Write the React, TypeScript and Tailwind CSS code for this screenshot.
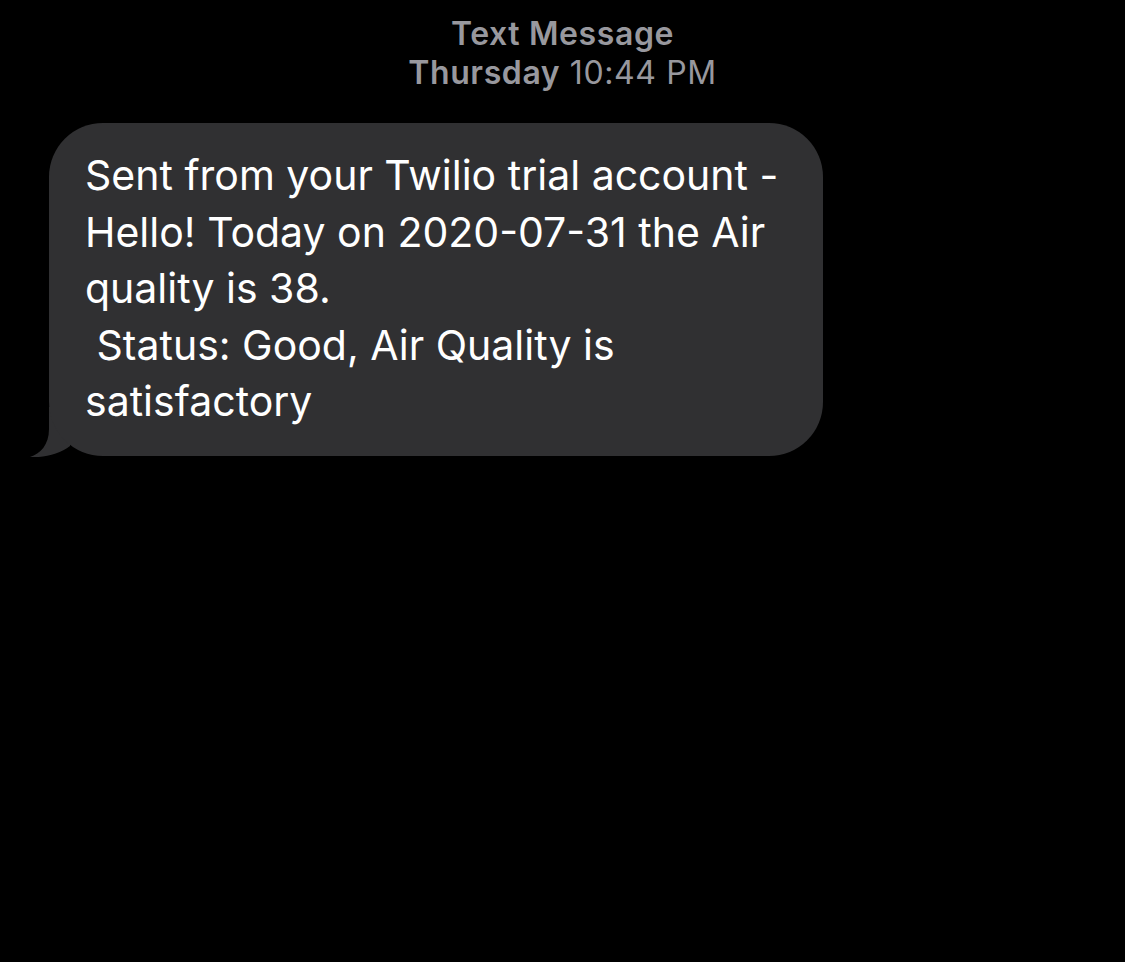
export default function App() {
  const lines = [
    'Sent from your Twilio trial account -',
    'Hello! Today on 2020-07-31 the Air',
    'quality is 38.',
    ' Status: Good, Air Quality is',
    'satisfactory',
  ];

  return (
    <div className="w-[1125px] h-[962px] bg-black font-['Inter','Liberation_Sans',sans-serif] overflow-hidden">
      <div className="pt-[14px] flex flex-col items-center text-[#98989e] text-[32px] leading-[39px] tracking-[0.6px]">
        <div className="font-semibold">Text Message</div>
        <div>
          <span className="font-semibold">Thursday</span> 10:44 PM
        </div>
      </div>

      <div className="relative mt-[31px] ml-[49px] w-[774px]">
        <svg
          className="absolute left-[-19px] bottom-[-1px]"
          width="50"
          height="50"
          viewBox="0 0 50 50"
        >
          <path d="M19 0 L19 22 C19 38 10 47 0 50 C14 51 30 47 40 39 L40 0 Z" fill="#303032" />
        </svg>
        <div className="relative bg-[#303032] rounded-[54px] pl-[36px] pr-[30px] pt-[24px] pb-[26px] text-white text-[41px] leading-[56.5px] whitespace-pre">
          {lines.map((l, i) => (
            <div key={i}>{l}</div>
          ))}
        </div>
      </div>
    </div>
  );
}
